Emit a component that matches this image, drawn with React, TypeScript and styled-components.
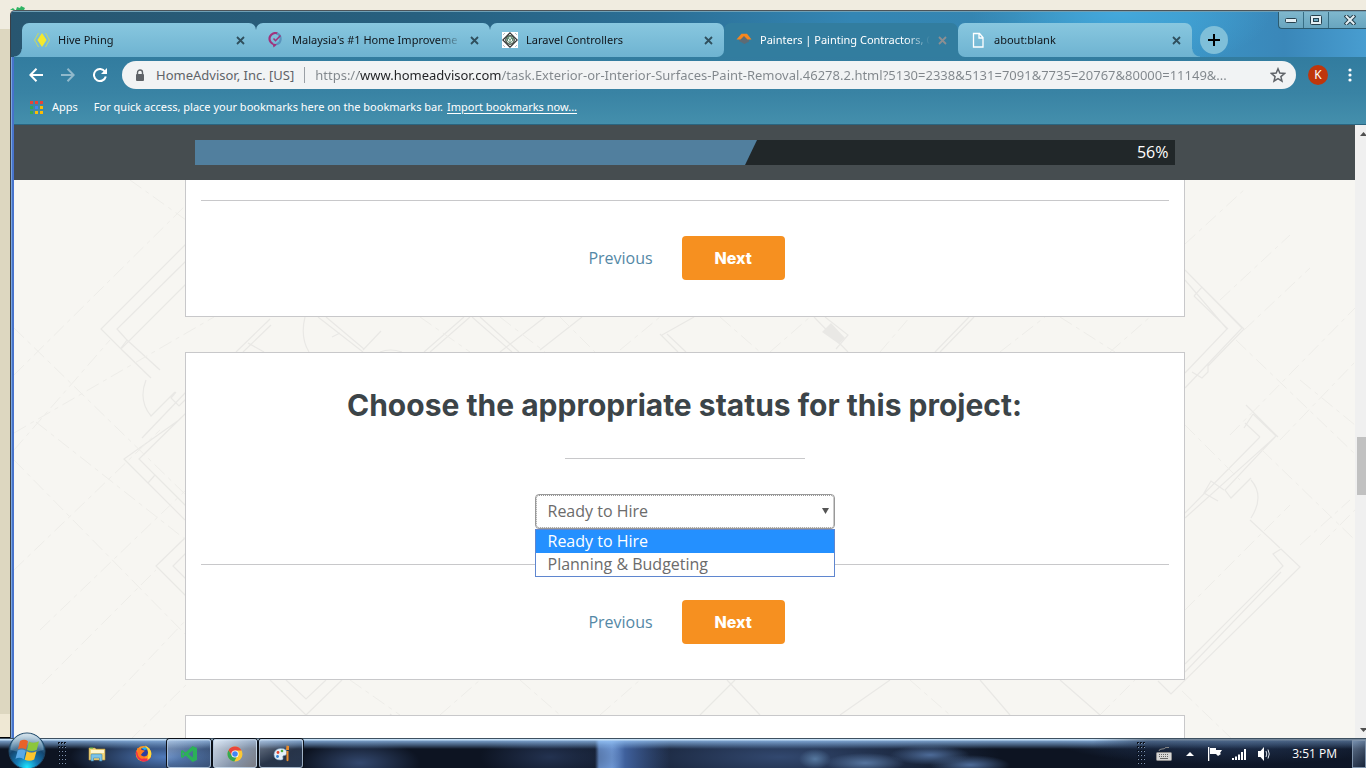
import React from "react";
import styled, { createGlobalStyle, css } from "styled-components";

const uiFont = `"Noto Sans", "Open Sans", sans-serif`;
const bodyFont = `"Open Sans", "Noto Sans", sans-serif`;
const headFont = `Inter, "Open Sans", sans-serif`;

const GlobalStyle = createGlobalStyle`
  * { box-sizing: border-box; }
  body { margin: 0; font-family: ${bodyFont}; overflow: hidden; }
  button { border: 0; padding: 0; background: none; font: inherit; color: inherit; cursor: pointer; }
  svg { display: block; }
`;

/* ---------- desktop and window frame ---------- */

const Desktop = styled.div`
  display: flex;
  flex-direction: column;
  height: 100vh;
  background: linear-gradient(#f0ece0 0 29px, #ddd7c0 29px calc(100% - 54px), #efe8d4 calc(100% - 54px) calc(100% - 31px), #000 calc(100% - 31px));
`;

const Backdrop = styled.div`
  flex: none;
  height: 10px;
  padding: 6px 0 0 10px;
`;

const BrowserWindow = styled.div`
  flex: 1;
  min-height: 0;
  margin-left: 10px;
  display: flex;
  flex-direction: column;
  border-top: 1px solid #4c5459;
  border-left: 1px solid #3a3f46;
  border-top-left-radius: 5px;
  background: linear-gradient(90deg, #7ba6dd 0 1px, #4773cb 1px);
  overflow: hidden;
`;

const TabStrip = styled.div`
  flex: none;
  position: relative;
  display: flex;
  align-items: flex-end;
  height: 46px;
  padding-left: 11px;
  border-top: 1px solid #6f9fb5;
  background:
    radial-gradient(ellipse 150px 60px at 1110px 0, #44a9dc, transparent),
    linear-gradient(90deg, #285670 0, #27607f 30%, #2b6f96 48%, #3486b4 62%, #3585b0 74%, #3b95c6 86%, #3a87b9 94%, #489dd0 100%);
`;

const TabList = styled.div`
  display: flex;
  flex: 0 1 1170px;
  min-width: 0;
`;

type TabKind = "idle" | "active";

const TabBox = styled.div<{ $kind: TabKind; $round?: "left" | "right"; $flare?: "left" | "right"; $divider?: boolean }>`
  position: relative;
  z-index: ${(p) => (p.$kind === "active" ? 0 : 1)};
  flex: 1 1 0;
  min-width: 0;
  height: 34px;
  display: flex;
  align-items: center;
  gap: 8px;
  padding: 0 11px 0 12px;
  border-radius: 7px 7px ${(p) => (p.$round === "right" ? "7px" : "0")} ${(p) => (p.$round === "left" ? "7px" : "0")};
  color: ${(p) => (p.$kind === "active" ? "#fff" : "#10151a")};
  background: ${(p) => (p.$kind === "active" ? "#327d9f" : "linear-gradient(#88c7df, #6eb3d1)")};
  ${(p) =>
    p.$kind === "active" &&
    css`
      &::before {
        content: "";
        position: absolute;
        z-index: -1;
        inset: auto -8px 0;
        height: 8px;
        background: #327d9f;
      }
    `}
  ${(p) =>
    p.$flare &&
    css`
      &::before {
        content: "";
        position: absolute;
        bottom: 0;
        ${p.$flare}: -8px;
        width: 8px;
        height: 8px;
        background: radial-gradient(circle at ${p.$flare} top, transparent 7px, #6eb3d1 8px);
      }
    `}
  ${(p) =>
    p.$divider &&
    css`
      &::after {
        content: "";
        position: absolute;
        right: -1px;
        top: 7px;
        width: 1px;
        height: 21px;
        background: #5594ad;
        z-index: 2;
      }
    `}
`;

const TabButton = styled.button`
  flex: 1;
  min-width: 0;
  display: flex;
  align-items: center;
  gap: 8px;
  height: 100%;
  font: 11px/16px ${uiFont};
  white-space: nowrap;
  overflow: hidden;
  mask-image: linear-gradient(90deg, #000 calc(100% - 24px), transparent);
  & > svg { flex: none; }
`;

const CloseButton = styled.button<{ $dim?: boolean }>`
  flex: none;
  color: ${(p) => (p.$dim ? "#8c8f92" : "#2f4f5d")};
`;

const NewTab = styled.button`
  flex: none;
  display: grid;
  place-items: center;
  width: 28px;
  height: 28px;
  margin: 0 0 3px 8px;
  border-radius: 50%;
  background: #7fbfd9;
`;

const Caption = styled.div`
  position: absolute;
  top: 0;
  right: 0;
  display: flex;
  height: 17px;
  border: 1px solid #2c5b70;
  border-width: 0 0 1px 1px;
  border-bottom-left-radius: 4px;
  background: linear-gradient(#7fb7cd, #68a5bf);
  & > button { display: grid; place-items: center; width: 25px; border-right: 1px solid #386e85; }
  & > button:last-child { width: 37px; border-right: 0; padding-left: 4px; }
`;

const Toolbar = styled.div`
  flex: none;
  display: flex;
  align-items: center;
  height: 36px;
  margin-left: 3px;
  padding: 0 8px 0 10px;
  background: linear-gradient(#327c9f, #3983a4);
  color: #fff;
`;

const NavButton = styled.button<{ $off?: boolean }>`
  display: grid;
  place-items: center;
  width: 24px;
  height: 24px;
  margin-right: 8px;
  opacity: ${(p) => (p.$off ? 0.45 : 1)};
`;

const Omnibox = styled.form`
  flex: 1;
  min-width: 0;
  display: flex;
  align-items: center;
  height: 28px;
  margin: 0 12px 0 2px;
  padding: 0 10px 0 12px;
  border-radius: 14px;
  background: #f1f3f4;
  font: 13px/20px ${uiFont};
  color: #5f6368;
`;

const SiteName = styled.span`
  flex: none;
  margin-left: 10px;
  padding-right: 10px;
  white-space: nowrap;
`;

const SiteRule = styled.span`
  flex: none;
  width: 1px;
  height: 16px;
  margin-right: 10px;
  background: #9aa0a6;
`;

const UrlInput = styled.input`
  flex: 1;
  min-width: 0;
  height: 24px;
  padding: 0;
  border: 0;
  outline: 0;
  font: inherit;
  color: #80868b;
  background: linear-gradient(90deg, #80868b 44px, #202124 44px 186px, #80868b 186px) text;
  -webkit-text-fill-color: transparent;
`;

const Avatar = styled.button`
  flex: none;
  width: 20px;
  height: 20px;
  margin-right: 14px;
  border-radius: 50%;
  background: #bf360c;
  font: 12px/20px ${uiFont};
  text-align: center;
`;

const BookmarkBar = styled.div`
  flex: none;
  display: flex;
  align-items: center;
  height: 32px;
  margin-left: 3px;
  padding: 0 16px 3px;
  border-bottom: 1px solid #2a6580;
  background: linear-gradient(#3983a4, #448fac);
  color: #fff;
  font: 11px/16px ${uiFont};
  white-space: nowrap;
  & a { color: inherit; margin-left: 4px; text-underline-offset: 2px; }
`;

const AppsButton = styled.button`
  display: flex;
  align-items: center;
  gap: 9px;
  margin-right: 16px;
`;

/* ---------- web page ---------- */

const Viewport = styled.div`
  flex: 1;
  min-height: 0;
  display: flex;
  margin-left: 3px;
`;

const Page = styled.main`
  position: relative;
  flex: 1;
  min-width: 0;
  overflow: hidden;
  background: #f7f6f2;
`;

const Blueprint = styled.svg`
  position: absolute;
  inset: 0;
  width: 100%;
  height: 100%;
`;

const StickyHeader = styled.header`
  position: relative;
  height: 55px;
  padding: 15px 10px;
  background: #464d50;
`;

const Progress = styled.div`
  display: flex;
  justify-content: flex-end;
  align-items: flex-start;
  max-width: 980px;
  height: 25px;
  margin: 0 auto;
  padding-right: 6px;
  background: #212729;
  color: #fff;
  font: 16px/24px ${bodyFont};
  position: relative;
`;

const ProgressFill = styled.div`
  position: absolute;
  inset: 0 auto 0 0;
  background: #517f9e;
  clip-path: polygon(0 0, 100% 0, calc(100% - 12px) 100%, 0 100%);
`;

const Cards = styled.div`
  position: relative;
  display: flex;
  flex-direction: column;
  gap: 35px;
  max-width: 1000px;
  margin: 0 auto;
`;

const Card = styled.section<{ $cut?: boolean }>`
  display: flex;
  flex-direction: column;
  align-items: center;
  padding: ${(p) => (p.$cut ? "20px 15px 36px" : "35px 15px")};
  border: 1px solid #c8c8ca;
  border-top-width: ${(p) => (p.$cut ? 0 : "1px")};
  background: #fff;
`;

const Title = styled.h2`
  margin: 0 0 35px;
  font: 700 30px/35px ${headFont};
  color: #3c4448;
  text-align: center;
`;

const Rule = styled.hr<{ $short?: boolean }>`
  width: ${(p) => (p.$short ? "240px" : "100%")};
  height: 1px;
  margin: 0 0 35px;
  border: 0;
  background: #c8c8ca;
`;

const Field = styled.div`
  position: relative;
  width: 300px;
  max-width: 100%;
  margin-bottom: 35px;
`;

const Select = styled.select`
  display: block;
  appearance: none;
  width: 100%;
  height: 35px;
  padding: 0 12px 2px;
  border: 1px solid #999;
  border-radius: 4px;
  outline: 1px dotted #999;
  outline-offset: -2px;
  background: #fff;
  color: #6b6b6b;
  font: 16px/24px ${bodyFont};
`;

const Arrow = styled.svg`
  position: absolute;
  top: 14px;
  right: 6px;
  pointer-events: none;
`;

const Menu = styled.ul`
  position: absolute;
  top: 100%;
  left: 0;
  right: 0;
  z-index: 2;
  margin: 0;
  padding: 0;
  list-style: none;
  border: 1px solid #5f86cf;
  background: #fff;
`;

const Option = styled.li<{ $on?: boolean }>`
  height: 23px;
  padding: 0 12px;
  font: 16px/23px ${bodyFont};
  color: ${(p) => (p.$on ? "#fff" : "#6b6b6b")};
  background: ${(p) => (p.$on ? "#2490ff" : "#fff")};
`;

const Actions = styled.div`
  display: flex;
  align-items: center;
  gap: 29px;
  padding-left: 4px;
`;

const PreviousLink = styled.a`
  color: #5488a6;
  font: 16px/24px ${bodyFont};
  text-decoration: none;
`;

const NextButton = styled.button`
  width: 103px;
  height: 44px;
  border-radius: 4px;
  background: #f69020;
  color: #fff;
  font: 800 16px/24px ${headFont};
`;

const Scrollbar = styled.div`
  flex: none;
  display: flex;
  flex-direction: column;
  width: 11px;
  overflow: hidden;
  background: #f0f0f0;
`;

const ScrollArrow = styled.button`
  flex: none;
  display: grid;
  place-items: center;
  width: 17px;
  height: 17px;
`;

const Track = styled.div<{ $grow: number }>`
  flex: ${(p) => p.$grow} 1 0;
`;

const Thumb = styled.div`
  flex: none;
  height: 58px;
  margin-left: 2px;
  background: #c1c1c1;
`;

/* ---------- taskbar ---------- */

const Taskbar = styled.footer`
  flex: none;
  position: relative;
  display: flex;
  align-items: center;
  height: 30px;
  border-top: 1px solid #3e5060;
  background:
    linear-gradient(90deg, transparent 80%, rgba(15, 25, 45, 0.45) 84%),
    linear-gradient(#c4dff6 0 1px, rgba(150, 195, 245, 0.75) 2px, rgba(130, 175, 225, 0.45) 6px, transparent 10px),
    radial-gradient(ellipse 95px 26px at 165px 18px, #4f7abb, transparent),
    radial-gradient(ellipse 60px 24px at 360px 24px, #33486e, transparent),
    radial-gradient(ellipse 70px 26px at 550px 18px, #233250, transparent),
    linear-gradient(90deg, transparent 595px, #7099d6 599px 612px, #3f609c 625px, transparent 670px),
    radial-gradient(ellipse 16px 10px at 815px 20px, #56789f, transparent),
    radial-gradient(ellipse 40px 10px at 865px 24px, #56759f, transparent),
    radial-gradient(ellipse 40px 10px at 930px 16px, #4d6b98, transparent),
    radial-gradient(ellipse 40px 10px at 970px 26px, #4d6b98, transparent),
    radial-gradient(ellipse 220px 40px at 780px 18px, #32486f, transparent),
    radial-gradient(ellipse 170px 22px at 1230px 4px, #2d4468, transparent),
    #0d1422;
  color: #fff;
`;

const StartButton = styled.button`
  flex: none;
  align-self: flex-end;
  position: relative;
  margin: 0 12px 0 8px;
`;

const Launchers = styled.nav`
  display: flex;
  align-items: center;
  gap: 2px;
  margin-left: 8px;
`;

const Launcher = styled.button<{ $state?: "open" | "front" }>`
  display: grid;
  place-items: center;
  width: 44px;
  height: 29px;
  border-radius: 3px;
  ${(p) =>
    p.$state &&
    css`
      border: 1px solid rgba(200, 220, 240, 0.7);
      background: ${p.$state === "front"
        ? "linear-gradient(135deg, rgba(235,242,250,.85), rgba(170,185,205,.75) 60%, rgba(150,150,155,.8))"
        : "linear-gradient(155deg, rgba(200,215,235,.55), rgba(120,150,190,.25) 55%, rgba(90,120,165,.35))"};
      box-shadow: 0 0 0 1px #0b1018;
    `}
`;

const Tray = styled.div`
  flex: 1;
  display: flex;
  align-items: center;
  justify-content: flex-end;
  gap: 10px;
`;

const Clock = styled.time`
  margin: 0 5px 0 11px;
  font: 12px/16px ${bodyFont};
  white-space: nowrap;
`;

const ShowDesktop = styled.button`
  width: 14px;
  height: 28px;
  border: 1px solid #7f93ab;
  background: linear-gradient(135deg, rgba(150, 175, 205, 0.6), rgba(30, 45, 70, 0.6));
`;

/* ---------- drawings ---------- */

const Cross = () => (
  <svg width="9" height="9" viewBox="0 0 9 9" stroke="currentColor" strokeWidth="1.8">
    <path d="M1 1l7 7M8 1l-7 7" />
  </svg>
);

const HiveIcon = () => (
  <svg width="16" height="16" viewBox="0 0 16 16">
    <path d="M8 1l4.500 7L8 15 3.500 8z" fill="#f5e92b" />
    <path d="M4.500 1L.5 8l4 7M11.500 1l4 7-4 7" fill="none" stroke="#c9d95e" strokeWidth="1" />
  </svg>
);

const PinIcon = () => (
  <svg width="16" height="16" viewBox="0 0 16 16" fill="none">
    <path d="M9.500 1.500A5.700 5.700 0 1 0 5 12" stroke="#a0337d" strokeWidth="2.200" />
    <path d="M4.500 11.500l1 4 4-3.200z" fill="#a0337d" />
    <path d="M9 1.500a5.700 5.700 0 0 1-.5 10.800" stroke="#5a93bd" strokeWidth="2.200" />
    <path d="M5.500 6.500l2 2.200L12.500 3.500" stroke="#a0337d" strokeWidth="1.600" />
  </svg>
);

const ControllersIcon = () => (
  <svg width="16" height="16" viewBox="0 0 16 16" fill="none">
    <path d="M0 0h16v16H0z" fill="#fff" />
    <path d="M8 .8L15.200 8 8 15.200.8 8z" stroke="#333" strokeWidth="1.200" />
    <circle cx="8" cy="8" r="4.200" stroke="#4c5a50" strokeWidth="1.500" />
    <path d="M5.500 6l2.500-1.500L10.500 6v3L8 11 5.500 9zM5.500 6L8 7.500 10.500 6M8 7.500V11" stroke="#5a8a6c" />
    <path d="M1 3l2-2M13 1l2 2M1 13l2 2M13 15l2-2" stroke="#bbb" />
  </svg>
);

const AdvisorIcon = () => (
  <svg width="16" height="16" viewBox="0 0 16 16">
    <path d="M4 6.500l4-3.500 5 4.500v2L8.500 12l-5.500-3z" fill="#5d6b75" />
    <path d="M.5 7.500L5.500 1.800h5.500L15.500 7.500h-4L8 4 4.500 7.500z" fill="#f6871f" />
  </svg>
);

const PageIcon = () => (
  <svg width="16" height="16" viewBox="0 0 16 16" fill="none" stroke="#fff" strokeWidth="1.300">
    <path d="M3.500 1.500h6l3.500 4v9.500h-9.500zM9 1.500v4.500h4" />
  </svg>
);

const GripDots = () => (
  <svg width="9" height="23" viewBox="0 0 9 23">
    {[0, 4, 8, 12, 16, 20].map((y) =>
      [0, 3, 6].map((x) => (
        <g key={`${x}-${y}`}>
          <rect x={x} y={y} width="2" height="2" fill="#0a111c" />
          <rect x={x + 1} y={y + 1} width="1" height="1" fill="#7f93b0" />
        </g>
      ))
    )}
  </svg>
);

const WindowsOrb = () => (
  <svg width="38" height="36" viewBox="0 0 38 36">
    <defs>
      <radialGradient id="orb" cx="50%" cy="95%" r="85%">
        <stop offset="0" stopColor="#1ee6ff" />
        <stop offset=".35" stopColor="#1579b4" />
        <stop offset=".7" stopColor="#14466f" />
        <stop offset="1" stopColor="#5f8fb0" />
      </radialGradient>
      <linearGradient id="gloss" x1="0" y1="0" x2="0" y2="1">
        <stop offset="0" stopColor="#fff" stopOpacity=".75" />
        <stop offset="1" stopColor="#b9d8ec" stopOpacity=".2" />
      </linearGradient>
    </defs>
    <circle cx="19" cy="19" r="18" fill="url(#orb)" stroke="#1d4565" />
    <path d="M2.500 18a16.500 16.500 0 0 1 33 0q-16 5-33 0z" fill="url(#gloss)" />
    <path d="M12 9q4.500-2.500 8 .2l-2 8.300q-4-2.500-8-.3z" fill="#e8622a" />
    <path d="M21 9.600q5 2.500 10-.3l-2.200 8.400q-5 2.600-9.800.2z" fill="#8cc63c" />
    <path d="M9.700 18.500q4-2.300 8 .2l-2 8.500q-4-2.700-8.200-.4z" fill="#5aa9e6" />
    <path d="M18.700 19.200q4.800 2.500 9.800 0l-2.300 8.300q-4.800 2.500-9.500.2z" fill="#fdc52e" />
  </svg>
);

const FolderIcon = () => (
  <svg width="18" height="16" viewBox="0 0 18 16">
    <path d="M1 2h6l1 1h9v11H1z" fill="#f2d77c" stroke="#b8963e" strokeWidth=".6" />
    <path d="M3 4h13v3H3z" fill="#fff6d0" />
    <path d="M3 15V9q0-1 1-1h9q1 0 1 1v6h-2.500v-3h-6v3z" fill="#7cc4e8" stroke="#3d83ad" strokeWidth=".6" />
    <path d="M2 1.500h3v1H2z" fill="#43b049" />
  </svg>
);

const FirefoxIcon = () => (
  <svg width="17" height="17" viewBox="0 0 17 17">
    <circle cx="8.500" cy="8.800" r="7.800" fill="#ff9a1f" />
    <path d="M1 5.500Q.3 14 7.500 16.400 13 17.300 16 12 9 16 4.500 10z" fill="#ee2d4f" />
    <path d="M10 .5q6.500 3 6.300 9-.3 4-4 5.500Q15 8 10 .5z" fill="#ffd93b" />
    <circle cx="8.500" cy="7.500" r="4.500" fill="#2c3e9e" />
    <path d="M2.500 3q3 0 4.500 2l3 .8-2.200 1.700-2 2.500q3 2.500 5.600.5-1.500 4-5.600 3Q1.500 12 2.500 3z" fill="#ff7a1c" />
    <path d="M7 3.500q3-2.500 5.500.5L9.500 5z" fill="#1fb0f0" />
  </svg>
);

const CodeIcon = () => (
  <svg width="18" height="18" viewBox="0 0 18 18">
    <path d="M12.500 1L17 3v12l-4.500 2L5.500 10.500 2.500 13 1 12.200V5.800L2.500 5l3 2.500zM12.800 5.500L8.300 9l4.500 3.500zM2.600 7.200v3.600L4.400 9z" fill="#2bb257" fillRule="evenodd" />
  </svg>
);

const ChromeIcon = () => (
  <svg width="16" height="16" viewBox="0 0 16 16">
    <circle cx="8" cy="8" r="7.500" fill="#fcc934" />
    <path d="M1.500 4.200A7.500 7.500 0 0 1 14.500 4.500H8L4.800 9.800z" fill="#e8453c" />
    <path d="M1.500 4.200L4.900 9.800 9.500 11.200 7.300 15.500A7.500 7.500 0 0 1 1.500 4.200z" fill="#34a853" />
    <circle cx="8" cy="8" r="3.600" fill="#fff" />
    <circle cx="8" cy="8" r="2.800" fill="#4285f4" />
  </svg>
);

const PaintIcon = () => (
  <svg width="17" height="17" viewBox="0 0 17 17">
    <path d="M7.500 3.500Q15 3.500 13.500 9q-.5 1.500-2.500 1.500-2 .5-1 2.500.5 2-2.500 2Q1 15 1 9.500 1.500 4 7.500 3.500z" fill="#e4eff8" stroke="#7da2c4" strokeWidth=".6" />
    <circle cx="5" cy="7.500" r="1.400" fill="#e5452f" />
    <circle cx="9" cy="6" r="1.300" fill="#4aae3c" />
    <circle cx="4.500" cy="11.500" r="1.400" fill="#2e7fd1" />
    <path d="M13 5l.5-4.500L16 1v4zM13.500 6h2v9.500q-1 1.500-2 0z" fill="#e88a2b" />
  </svg>
);

const BlueprintLines = () => (
  <Blueprint viewBox="14 125 1341 613" preserveAspectRatio="xMidYMin slice" aria-hidden="true" fill="none">
    <g stroke="#e9e8e5" strokeWidth="1.200">
      <path d="M186 244L101 329l20 20 65-65M186 261L117 329l10 11-6 8M121 349l30 29M127 340l33 30M146 380q-8 20 5 36l24-24M142 438l44-46M176 392l-5 6 8 8 7-7" />
      <path d="M179 420L124 459l24 24 7-8-16-16 47-46M155 475l31 31M148 483l37 37M186 537l-30 29 30 30M186 553l-13 13 13 13" />
      <path d="M236 352l34-33M243 352l28-27M270 319l-4 4M248 343l16 9M318 317l45 35M326 317l38 32M363 350l18-19M340 333l-8 4M305 317q-5 20 4 35M380 352q10-4 22 0" />
      <path d="M270 680l36 35M286 680l20 19 20-19M306 715l36-35M424 352l40-35M430 352l40-35M472 317l40 35M480 317l39 35M500 352l45-35M540 350l42-33M662 335l32-18M660 334l18 18M667 334l19 18M814 317l34 35M825 317l23 18-12 14M935 352l34-35M940 352l34-35" />
      <path d="M1185 270l57 58-57 60M1185 280l42 49-42 44M1194 296l8-9 42 42-36 37M1194 296l34 33M1192 372l10 6 6-6 0-8M1185 513l75-76M1185 518l90-81M1260 437l-15-14M1278 437l-32-32M1253 414l-9 14M1253 414l23 22-51 54 6 8 20-20M1251 480q14 16 0 38M1185 664l98-98-10-12 8-5 19 18-129 127-13-13M1185 672l96-100M1250 520l30 28M1224 490l-13-9-7 12 14 8" />
      <path d="M420 740l-30-26M700 715l35-35M760 715l-33-35M840 715l50-35M980 680l30 35M1060 680l40 35" />
    </g>
    <path d="M822 332l9-9 14 15-6 6z" fill="#e9e8e5" />
    <g stroke="#eeede9" strokeDasharray="14 5 4 5">
      <path d="M14 375L186 205M14 433L214 317M14 450L110 340M14 328L186 495M36 422L186 540M14 570L160 430M42 684L156 570M40 630l146-140M14 460L186 635M130 740l56-55M110 700l76-80M130 180l56 40" />
      <path d="M1185 244l60-55M1220 300l70-65M1244 330l66-62M1230 435L1355 308M1280 440L1355 362M1236 340L1355 454M1262 450L1355 540M1300 380l55 45M1320 545l55-55M1300 545l50-45M1185 610l105-105M1182 691l50 48M1185 425l55 55M1100 715l60-60" />
      <path d="M420 317l50 35M500 317l45 35M620 350l40-33M720 317l40 35M770 352l40-35M880 352l30-35M560 317l35 35M1000 352l45-35M1060 317l55 35M1110 352l40-35M350 680l50 35M440 715l40-35M520 680l40 35M600 715l40-35M910 680l40 35" />
    </g>
  </Blueprint>
);

const TabItem = ({
  icon,
  label,
  ...box
}: {
  icon: React.ReactNode;
  label: string;
  $kind: TabKind;
  $round?: "left" | "right";
  $flare?: "left" | "right";
  $divider?: boolean;
}) => (
  <TabBox {...box}>
    <TabButton role="tab" aria-selected={box.$kind === "active"}>
      {icon}
      {label}
    </TabButton>
    <CloseButton aria-label={`Close ${label}`} $dim={box.$kind === "active"}>
      <Cross />
    </CloseButton>
  </TabBox>
);

const StepActions = () => (
  <Actions>
    <PreviousLink href="#previous">Previous</PreviousLink>
    <NextButton type="button">Next</NextButton>
  </Actions>
);

const appColors = ["#ea4335", "#ea4335", "#ea4335", "#34a853", "#4285f4", "#fbbc05", "#34a853", "#fbbc05", "#fbbc05"];

export default function App() {
  const progress = 57.4;
  return (
    <>
      <GlobalStyle />
      <Desktop>
        <Backdrop>
          <svg width="16" height="4" viewBox="0 0 16 4" fill="#2fb463">
            <path d="M0 4l3-2 2 2zM6 4l1-3 3 1 1-2 4 2-1 2z" />
          </svg>
        </Backdrop>
        <BrowserWindow>
          <TabStrip>
            <TabList role="tablist">
              <TabItem icon={<HiveIcon />} label="Hive Phing" $kind="idle" $flare="left" $divider />
              <TabItem icon={<PinIcon />} label="Malaysia's #1 Home Improveme" $kind="idle" $divider />
              <TabItem icon={<ControllersIcon />} label="Laravel Controllers" $kind="idle" $round="right" />
              <TabItem icon={<AdvisorIcon />} label="Painters | Painting Contractors, C" $kind="active" />
              <TabItem icon={<PageIcon />} label="about:blank" $kind="idle" $round="left" $flare="right" />
            </TabList>
            <NewTab aria-label="New tab">
              <svg width="12" height="12" viewBox="0 0 12 12" stroke="#000" strokeWidth="2">
                <path d="M6 0v12M0 6h12" />
              </svg>
            </NewTab>
            <Caption>
              <button aria-label="Minimize">
                <svg width="12" height="5" viewBox="0 0 12 5">
                  <rect x=".5" y=".5" width="11" height="4" rx="1" fill="#e4eff4" stroke="#27414e" />
                </svg>
              </button>
              <button aria-label="Maximize">
                <svg width="12" height="10" viewBox="0 0 12 10">
                  <rect x=".5" y=".5" width="11" height="9" rx="1" fill="#e4eff4" stroke="#27414e" />
                  <rect x="3.500" y="3.500" width="5" height="3" fill="#6fadc6" stroke="#27414e" />
                </svg>
              </button>
              <button aria-label="Close window">
                <svg width="12" height="10" viewBox="0 0 12 10" strokeLinecap="square">
                  <path d="M2.500 1.500l7 7M9.500 1.500l-7 7" stroke="#27414e" strokeWidth="4" />
                  <path d="M2.500 1.500l7 7M9.500 1.500l-7 7" stroke="#e4eff4" strokeWidth="2" />
                </svg>
              </button>
            </Caption>
          </TabStrip>

          <Toolbar>
            <NavButton aria-label="Back">
              <svg width="14" height="14" viewBox="0 0 14 14" fill="none" stroke="#fff" strokeWidth="2">
                <path d="M14 7H1.500M7.500 .8L1.300 7l6.200 6.200" />
              </svg>
            </NavButton>
            <NavButton aria-label="Forward" $off>
              <svg width="14" height="14" viewBox="0 0 14 14" fill="none" stroke="#fff" strokeWidth="2">
                <path d="M0 7h12.500M6.500 .8L12.700 7l-6.200 6.200" />
              </svg>
            </NavButton>
            <NavButton aria-label="Reload">
              <svg width="14" height="14" viewBox="0 0 14 14" fill="none">
                <path d="M12 3.700A6 6 0 1 0 12.800 8.500" stroke="#fff" strokeWidth="2" />
                <path d="M14 0v6H8z" fill="#fff" />
              </svg>
            </NavButton>
            <Omnibox onSubmit={(e) => e.preventDefault()}>
              <svg width="12" height="13" viewBox="0 0 12 13" fill="none">
                <rect x="2" y="5" width="8" height="7" rx="1" fill="#5f6368" />
                <path d="M3.500 5.500V3.500a2.500 2.500 0 0 1 5 0v2" stroke="#5f6368" strokeWidth="1.400" />
              </svg>
              <SiteName>HomeAdvisor, Inc. [US]</SiteName>
              <SiteRule />
              <UrlInput
                aria-label="Address"
                defaultValue="https://www.homeadvisor.com/task.Exterior-or-Interior-Surfaces-Paint-Removal.46278.2.html?5130=2338&5131=7091&7735=20767&80000=11149&..."
              />
              <button type="button" aria-label="Bookmark this page">
                <svg width="16" height="16" viewBox="0 0 16 16" fill="none" stroke="#5f6368" strokeWidth="1.500">
                  <path d="M8 1.800l1.800 4.300 4.700.4-3.600 3.100 1.100 4.600L8 11.700l-4 2.500 1.100-4.600L1.500 6.500l4.700-.4z" />
                </svg>
              </button>
            </Omnibox>
            <Avatar aria-label="Profile K">K</Avatar>
            <button aria-label="Menu">
              <svg width="16" height="16" viewBox="0 0 16 16" fill="#fff">
                <circle cx="8" cy="3" r="1.600" />
                <circle cx="8" cy="8" r="1.600" />
                <circle cx="8" cy="13" r="1.600" />
              </svg>
            </button>
          </Toolbar>

          <BookmarkBar>
            <AppsButton>
              <svg width="13" height="13" viewBox="0 0 13 13">
                {appColors.map((c, i) => (
                  <rect key={i} x={(i % 3) * 5} y={Math.floor(i / 3) * 5} width="3" height="3" fill={c} />
                ))}
              </svg>
              Apps
            </AppsButton>
            For quick access, place your bookmarks here on the bookmarks bar.
            <a href="#import">Import bookmarks now...</a>
          </BookmarkBar>

          <Viewport>
            <Page>
              <BlueprintLines />
              <StickyHeader>
                <Progress role="progressbar" aria-valuenow={56} aria-valuemin={0} aria-valuemax={100}>
                  <ProgressFill style={{ width: `${progress}%` }} />
                  56%
                </Progress>
              </StickyHeader>
              <Cards>
                <Card $cut>
                  <Rule />
                  <StepActions />
                </Card>
                <Card>
                  <Title id="status-title">Choose the appropriate status for this project:</Title>
                  <Rule $short />
                  <Field>
                    <Select aria-labelledby="status-title" defaultValue="ready">
                      <option value="ready">Ready to Hire</option>
                      <option value="planning">Planning &amp; Budgeting</option>
                    </Select>
                    <Arrow width="7" height="6" viewBox="0 0 7 6">
                      <path d="M0 0h7L3.500 6z" fill="#555" />
                    </Arrow>
                    <Menu role="listbox" aria-labelledby="status-title">
                      <Option role="option" aria-selected $on>
                        Ready to Hire
                      </Option>
                      <Option role="option" aria-selected={false}>
                        Planning &amp; Budgeting
                      </Option>
                    </Menu>
                  </Field>
                  <Rule />
                  <StepActions />
                </Card>
                <Card />
              </Cards>
            </Page>
            <Scrollbar>
              <ScrollArrow aria-label="Scroll up">
                <svg width="7" height="4" viewBox="0 0 7 4">
                  <path d="M0 4h7L3.500 0z" fill="#505050" />
                </svg>
              </ScrollArrow>
              <Track $grow={295} />
              <Thumb />
              <Track $grow={226} />
              <ScrollArrow aria-label="Scroll down">
                <svg width="7" height="4" viewBox="0 0 7 4">
                  <path d="M0 0h7L3.500 4z" fill="#505050" />
                </svg>
              </ScrollArrow>
            </Scrollbar>
          </Viewport>
        </BrowserWindow>

        <Taskbar>
          <StartButton aria-label="Start">
            <WindowsOrb />
          </StartButton>
          <GripDots />
          <Launchers aria-label="Programs">
            <Launcher aria-label="Explorer">
              <FolderIcon />
            </Launcher>
            <Launcher aria-label="Firefox">
              <FirefoxIcon />
            </Launcher>
            <Launcher aria-label="Code editor" $state="open">
              <CodeIcon />
            </Launcher>
            <Launcher aria-label="Chrome" $state="front">
              <ChromeIcon />
            </Launcher>
            <Launcher aria-label="Paint" $state="open">
              <PaintIcon />
            </Launcher>
          </Launchers>
          <Tray>
            <GripDots />
            <svg width="16" height="14" viewBox="0 0 16 14" fill="none">
              <path d="M3 4q0-2 3-2t3-1 4-.5" stroke="#8a8a8a" />
              <rect x=".5" y="5.500" width="15" height="8" rx="1" fill="#d6d6d6" stroke="#8c8c8c" />
              <path d="M3 7.500h10M3 9.500h10" stroke="#666" strokeDasharray="1 1" />
              <path d="M4 11.500h8" stroke="#666" />
            </svg>
            <svg width="16" height="16" viewBox="0 0 16 16">
              <path d="M4 10h8L8 6z" fill="#fff" />
            </svg>
            <svg width="14" height="15" viewBox="0 0 14 15" fill="#fff">
              <path d="M0 1h1.300v14H0zM2 2h6v6H2zM8 4h6l-2 3 1 1-3 2-2-2z" />
            </svg>
            <svg width="15" height="12" viewBox="0 0 15 12" fill="#fff">
              <path d="M0 10h2v2H0zM3 8.500h2V12H3zM6 6.500h2V12H6zM9 4h2v8H9zM12 1h2v11h-2z" />
            </svg>
            <svg width="14" height="14" viewBox="0 0 14 14" fill="#fff">
              <path d="M1 4h2.500L7 0v14L3.500 10H1z" />
              <path d="M9 4q1.500 3 0 6M11 2.500q2.500 4.500 0 9" fill="none" stroke="#dfe6ee" />
            </svg>
            <Clock>3:51 PM</Clock>
            <ShowDesktop aria-label="Show desktop" />
          </Tray>
        </Taskbar>
      </Desktop>
    </>
  );
}
